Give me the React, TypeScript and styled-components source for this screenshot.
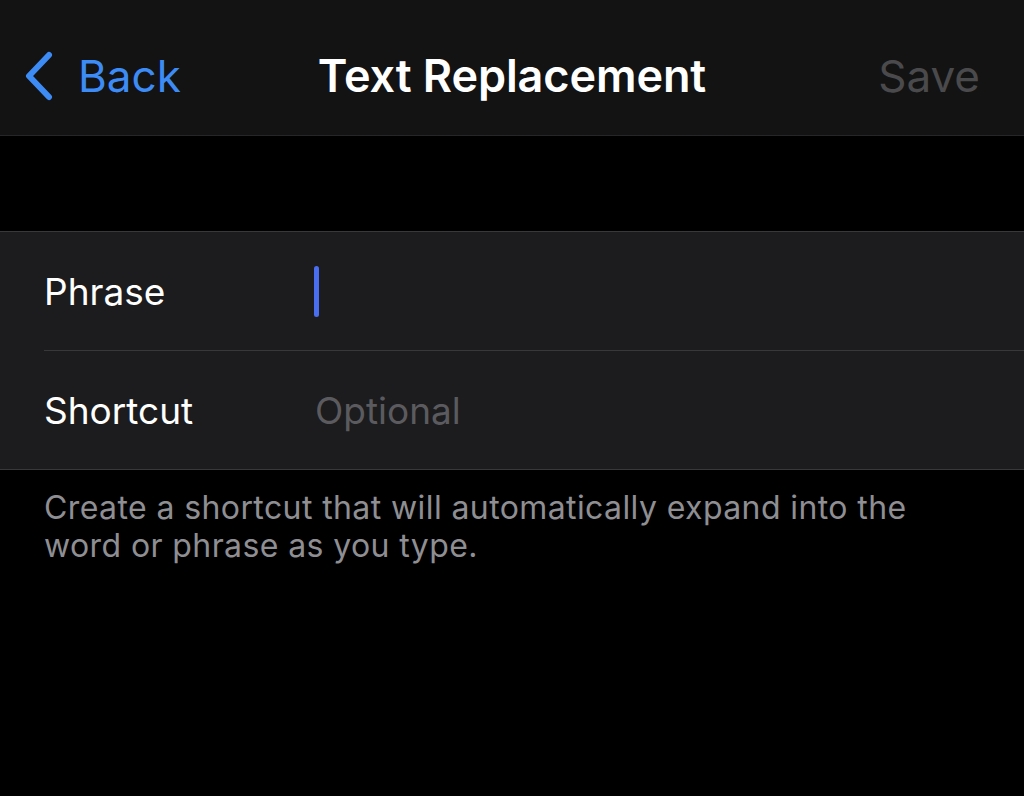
import React from "react";
import styled, { createGlobalStyle } from "styled-components";

const GlobalStyle = createGlobalStyle`
  html, body {
    margin: 0;
    padding: 0;
    background: #000;
  }
  body {
    font-family: Inter, "Liberation Sans", sans-serif;
    -webkit-font-smoothing: antialiased;
  }
`;

const Screen = styled.div`
  width: 1024px;
  height: 796px;
  background: #000;
  overflow: hidden;
`;

const NavBar = styled.div`
  height: 136px;
  box-sizing: border-box;
  padding: 16px 24px 0 24px;
  background: #131313;
  border-bottom: 1px solid #262628;
  display: grid;
  grid-template-columns: 1fr auto 1fr;
  align-items: center;
`;

const BackButton = styled.div`
  display: flex;
  align-items: center;
  gap: 24px;
  color: #3d8bf5;
  font-size: 44px;
  font-weight: 400;
`;

const Title = styled.div`
  color: #fff;
  font-size: 45px;
  font-weight: 600;
  letter-spacing: -0.1px;
`;

const SaveButton = styled.div`
  justify-self: end;
  margin-right: 20px;
  color: #4a4a4c;
  font-size: 44px;
  font-weight: 400;
`;

const Spacer = styled.div`
  height: 95px;
`;

const Group = styled.div`
  background: #1c1c1e;
  border-top: 1px solid #38383a;
  border-bottom: 1px solid #38383a;
`;

const Row = styled.div<{ $divider?: boolean }>`
  height: 118px;
  margin-left: 44px;
  display: flex;
  align-items: center;
  border-bottom: ${(p) => (p.$divider ? "1px solid #38383a" : "none")};
`;

const Label = styled.div`
  width: 270px;
  color: #fff;
  font-size: 37px;
  font-weight: 400;
`;

const Field = styled.div`
  flex: 1;
  display: flex;
  align-items: center;
  font-size: 37px;
`;

const Caret = styled.div`
  width: 5px;
  height: 51px;
  border-radius: 3px;
  background: #4a6ef0;
`;

const Placeholder = styled.span`
  color: #5b5b5f;
  margin-left: 1px;
`;

const Footer = styled.p`
  margin: 19px 100px 0 44px;
  color: #8e8e93;
  font-size: 32px;
  line-height: 38px;
  letter-spacing: 0.4px;
`;

const Chevron = () => (
  <svg width="30" height="50" viewBox="0 0 30 50">
    <path
      d="M25 4 L5 25 L25 46"
      fill="none"
      stroke="#3d8bf5"
      strokeWidth="6"
      strokeLinecap="round"
      strokeLinejoin="round"
    />
  </svg>
);

export default function App() {
  return (
    <Screen>
      <GlobalStyle />
      <NavBar>
        <BackButton>
          <Chevron />
          Back
        </BackButton>
        <Title>Text Replacement</Title>
        <SaveButton>Save</SaveButton>
      </NavBar>
      <Spacer />
      <Group>
        <Row $divider>
          <Label>Phrase</Label>
          <Field>
            <Caret />
          </Field>
        </Row>
        <Row>
          <Label>Shortcut</Label>
          <Field>
            <Placeholder>Optional</Placeholder>
          </Field>
        </Row>
      </Group>
      <Footer>
        Create a shortcut that will automatically expand into the word or phrase as you type.
      </Footer>
    </Screen>
  );
}
